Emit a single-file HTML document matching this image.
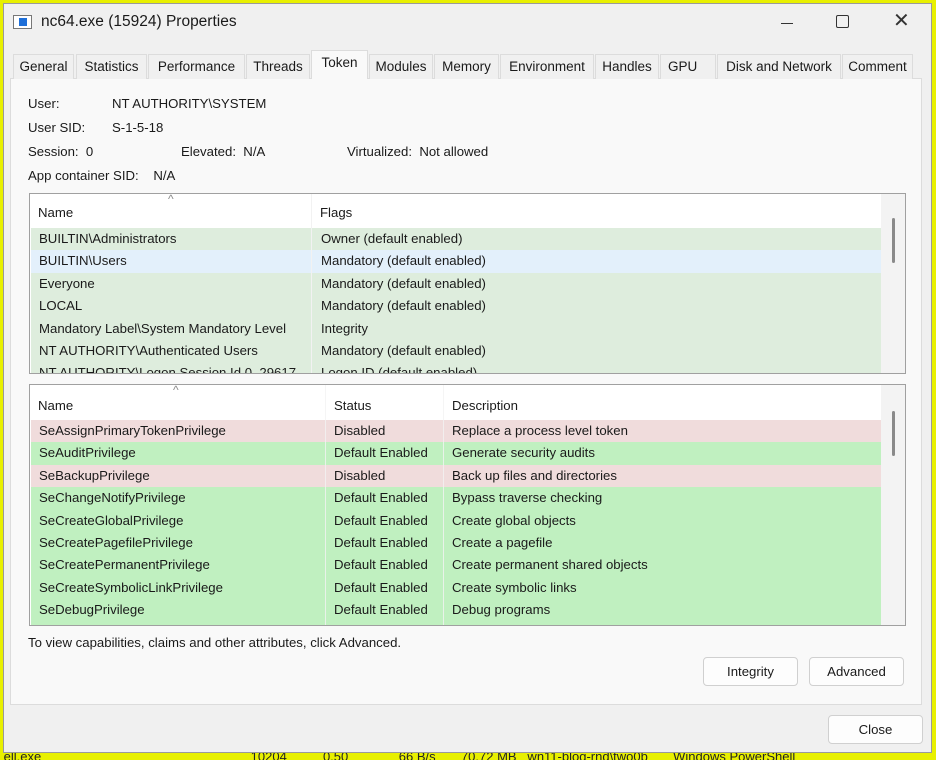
<!DOCTYPE html>
<html><head><meta charset="utf-8"><style>
*{margin:0;padding:0;box-sizing:border-box}
body{width:936px;height:760px;overflow:hidden;background:#e8f000;font-family:"Liberation Sans",sans-serif;font-size:13.2px;color:#1a1a1a;position:relative}
.dlg{position:absolute;left:3px;top:3px;width:929px;height:750px;background:#f0f0f0;border:1px solid #9a9a9a}
.abs{position:absolute;white-space:nowrap}
.tab{position:absolute;top:50px;height:25px;background:#f0f0f0;border:1px solid #dcdcdc;border-bottom:none;text-align:center;line-height:24px;font-size:13.5px;color:#1a1a1a}
.panel{position:absolute;left:6px;top:74px;width:912px;height:627px;background:#f9f9f9;border:1px solid #dcdcdc}
.lv{position:absolute;background:#fff;border:1px solid #a0a0a0;overflow:hidden}
.row{position:absolute;left:1px;height:22.4px;line-height:22px}
.row span{position:absolute;top:0}
.sb{position:absolute;top:0;right:0;width:24px;bottom:0;background:#f3f3f3}
.thumb{position:absolute;left:11px;width:3px;background:#8a8a8a;border-radius:2px}
.btn{position:absolute;height:29px;background:#fdfdfd;border:1px solid #d0d0d0;border-radius:4px;text-align:center;line-height:27px}
.sep{position:absolute;top:0;width:1px;height:100%;background:#eee}
</style></head><body>
<div class="abs" style="left:0;top:753px;font-size:13px;color:#222;line-height:7px;overflow:hidden;height:7px;width:936px">&nbsp;ell.exe &nbsp;&nbsp;&nbsp;&nbsp;&nbsp;&nbsp;&nbsp;&nbsp;&nbsp;&nbsp;&nbsp;&nbsp;&nbsp;&nbsp;&nbsp;&nbsp;&nbsp;&nbsp;&nbsp;&nbsp;&nbsp;&nbsp;&nbsp;&nbsp;&nbsp;&nbsp;&nbsp;&nbsp;&nbsp;&nbsp;&nbsp;&nbsp;&nbsp;&nbsp;&nbsp;&nbsp;&nbsp;&nbsp;&nbsp;&nbsp;&nbsp;&nbsp;&nbsp;&nbsp;&nbsp;&nbsp;&nbsp;&nbsp;&nbsp;&nbsp;&nbsp;&nbsp;&nbsp;&nbsp;&nbsp;&nbsp; 10204 &nbsp;&nbsp;&nbsp;&nbsp;&nbsp;&nbsp;&nbsp;&nbsp; 0.50 &nbsp;&nbsp;&nbsp;&nbsp;&nbsp;&nbsp;&nbsp;&nbsp;&nbsp;&nbsp;&nbsp;&nbsp; 66 B/s &nbsp;&nbsp;&nbsp;&nbsp;&nbsp; 70.72 MB &nbsp; wn11-blog-rnd\two0b &nbsp;&nbsp;&nbsp;&nbsp;&nbsp; Windows PowerShell</div>
<div class="dlg">
 <div class="abs" style="left:9px;top:11px;width:19px;height:14px;border:1px solid #777;background:#fff"><div style="position:absolute;left:5px;top:2px;width:8px;height:8px;background:#1e6fd9"></div></div>
 <div class="abs" style="left:37px;top:9px;font-size:15.5px">nc64.exe (15924) Properties</div>
 <div class="abs" style="left:777px;top:19px;width:12px;height:1px;background:#333"></div>
 <div class="abs" style="left:832px;top:11px;width:13px;height:13px;border:1.3px solid #333;border-radius:2px"></div>
 <div class="abs" style="left:889px;top:4px;font-size:20px;color:#333">✕</div>

 <div class="panel"></div>
 <div class="tab" style="left:9px;width:61px">General</div>
 <div class="tab" style="left:72px;width:71px">Statistics</div>
 <div class="tab" style="left:144px;width:97px">Performance</div>
 <div class="tab" style="left:242px;width:64px">Threads</div>
 <div class="tab" style="left:307px;top:46px;height:29px;width:57px;background:#f9f9f9;line-height:24px">Token</div>
 <div class="tab" style="left:365px;width:64px">Modules</div>
 <div class="tab" style="left:430px;width:65px">Memory</div>
 <div class="tab" style="left:496px;width:94px">Environment</div>
 <div class="tab" style="left:591px;width:64px">Handles</div>
 <div class="tab" style="left:656px;width:56px;text-align:left;padding-left:7px">GPU</div>
 <div class="tab" style="left:713px;width:124px">Disk and Network</div>
 <div class="tab" style="left:838px;width:71px">Comment</div>

 <div class="abs" style="left:24px;top:92px">User:</div>
 <div class="abs" style="left:108px;top:92px">NT AUTHORITY\SYSTEM</div>
 <div class="abs" style="left:24px;top:116px">User SID:</div>
 <div class="abs" style="left:108px;top:116px">S-1-5-18</div>
 <div class="abs" style="left:24px;top:140px">Session:&nbsp; 0</div>
 <div class="abs" style="left:177px;top:140px">Elevated:&nbsp; N/A</div>
 <div class="abs" style="left:343px;top:140px">Virtualized:&nbsp; Not allowed</div>
 <div class="abs" style="left:24px;top:164px">App container SID:&nbsp;&nbsp;&nbsp; N/A</div>

 <div class="lv" style="left:25px;top:189px;width:877px;height:181px">
  <div class="abs" style="left:138px;top:-2px;font-size:12px;color:#888">^</div>
  <div class="sep" style="left:281px"></div>
  <div class="abs" style="left:8px;top:11px">Name</div>
  <div class="abs" style="left:290px;top:11px">Flags</div>
  <div class="row" style="top:34px;width:850px;background:#deeddd"><span style="left:8px">BUILTIN\Administrators</span><span style="left:290px">Owner (default enabled)</span></div>
  <div class="row" style="top:56.4px;width:853px;background:#e3f0fb"><span style="left:8px">BUILTIN\Users</span><span style="left:290px">Mandatory (default enabled)</span></div>
  <div class="row" style="top:78.8px;width:850px;height:100px;background:#deeddd"><span style="left:8px">Everyone</span><span style="left:290px">Mandatory (default enabled)</span>
   <span style="left:8px;top:22.4px">LOCAL</span><span style="left:290px;top:22.4px">Mandatory (default enabled)</span>
   <span style="left:8px;top:44.8px">Mandatory Label\System Mandatory Level</span><span style="left:290px;top:44.8px">Integrity</span>
   <span style="left:8px;top:67.2px">NT AUTHORITY\Authenticated Users</span><span style="left:290px;top:67.2px">Mandatory (default enabled)</span>
   <span style="left:8px;top:89.6px">NT AUTHORITY\Logon Session Id 0_29617</span><span style="left:290px;top:89.6px">Logon ID (default enabled)</span></div>
  <div class="sep" style="left:281px;height:181px;background:#f2f2f2"></div>
  <div class="sb"><div class="thumb" style="top:24px;height:45px"></div></div>
 </div>

 <div class="lv" style="left:25px;top:380px;width:877px;height:242px">
  <div class="abs" style="left:143px;top:-2px;font-size:12px;color:#888">^</div>
  <div class="abs" style="left:8px;top:13px">Name</div>
  <div class="abs" style="left:304px;top:13px">Status</div>
  <div class="abs" style="left:422px;top:13px">Description</div>
  <div class="row" style="top:35px;width:850px;background:#f0dcdc"><span style="left:8px">SeAssignPrimaryTokenPrivilege</span><span style="left:303px">Disabled</span><span style="left:421px">Replace a process level token</span></div>
  <div class="row" style="top:57.4px;width:850px;background:#c0f0c0"><span style="left:8px">SeAuditPrivilege</span><span style="left:303px">Default Enabled</span><span style="left:421px">Generate security audits</span></div>
  <div class="row" style="top:79.8px;width:850px;background:#f0dcdc"><span style="left:8px">SeBackupPrivilege</span><span style="left:303px">Disabled</span><span style="left:421px">Back up files and directories</span></div>
  <div class="row" style="top:102.2px;width:850px;height:140px;background:#c0f0c0">
   <span style="left:8px">SeChangeNotifyPrivilege</span><span style="left:303px">Default Enabled</span><span style="left:421px">Bypass traverse checking</span>
   <span style="left:8px;top:22.4px">SeCreateGlobalPrivilege</span><span style="left:303px;top:22.4px">Default Enabled</span><span style="left:421px;top:22.4px">Create global objects</span>
   <span style="left:8px;top:44.8px">SeCreatePagefilePrivilege</span><span style="left:303px;top:44.8px">Default Enabled</span><span style="left:421px;top:44.8px">Create a pagefile</span>
   <span style="left:8px;top:67.2px">SeCreatePermanentPrivilege</span><span style="left:303px;top:67.2px">Default Enabled</span><span style="left:421px;top:67.2px">Create permanent shared objects</span>
   <span style="left:8px;top:89.6px">SeCreateSymbolicLinkPrivilege</span><span style="left:303px;top:89.6px">Default Enabled</span><span style="left:421px;top:89.6px">Create symbolic links</span>
   <span style="left:8px;top:112px">SeDebugPrivilege</span><span style="left:303px;top:112px">Default Enabled</span><span style="left:421px;top:112px">Debug programs</span></div>
  <div class="sep" style="left:295px;background:#f2f2f2;opacity:.8"></div>
  <div class="sep" style="left:413px;background:#f2f2f2;opacity:.8"></div>
  <div class="sb"><div class="thumb" style="top:26px;height:45px"></div></div>
 </div>

 <div class="abs" style="left:24px;top:631px">To view capabilities, claims and other attributes, click Advanced.</div>
 <div class="btn" style="left:699px;top:653px;width:95px">Integrity</div>
 <div class="btn" style="left:805px;top:653px;width:95px">Advanced</div>
 <div class="btn" style="left:824px;top:711px;width:95px">Close</div>
</div>
</body></html>
